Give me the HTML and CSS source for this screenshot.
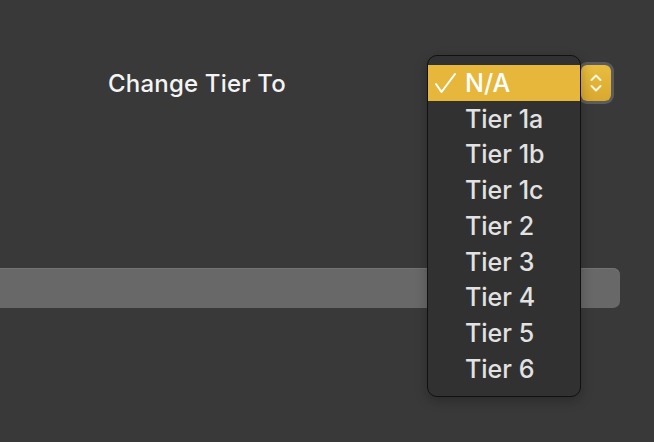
FILE: index.html
```html
<!DOCTYPE html>
<html>
<head>
<meta charset="utf-8">
<link rel="stylesheet" href="styles.css">
</head>
<body>
<div class="panel">
  <div class="row">
    <span class="label">Change Tier To</span>
    <div class="popup">
      <div class="stepper">
        <svg width="14" height="22" viewBox="0 0 14 22">
          <polyline points="2.5,8 7,3.5 11.5,8" fill="none" stroke="#fff7e0" stroke-width="2" stroke-linecap="round" stroke-linejoin="round"/>
          <polyline points="2.5,14 7,18.5 11.5,14" fill="none" stroke="#fff7e0" stroke-width="2" stroke-linecap="round" stroke-linejoin="round"/>
        </svg>
      </div>
    </div>
  </div>
  <div class="bar"></div>
</div>
<div class="menu">
  <div class="item selected">
    <svg class="check" width="24" height="22" viewBox="0 0 24 22">
      <polyline points="2,12 7.5,20 21,2" fill="none" stroke="#fff" stroke-width="2" stroke-linecap="round" stroke-linejoin="round"/>
    </svg>
    <span>N/A</span>
  </div>
  <div class="item"><span>Tier 1a</span></div>
  <div class="item"><span>Tier 1b</span></div>
  <div class="item"><span>Tier 1c</span></div>
  <div class="item"><span>Tier 2</span></div>
  <div class="item"><span>Tier 3</span></div>
  <div class="item"><span>Tier 4</span></div>
  <div class="item"><span>Tier 5</span></div>
  <div class="item"><span>Tier 6</span></div>
</div>
</body>
</html>
```
FILE: styles.css
```css
html, body {
  margin: 0;
  padding: 0;
}
body {
  width: 654px;
  height: 442px;
  background: #393939;
  font-family: Inter, "Liberation Sans", sans-serif;
  overflow: hidden;
  position: relative;
}
.panel {
  padding-top: 61px;
}
.row {
  display: flex;
  align-items: center;
  height: 44px;
}
.label {
  margin-left: 108px;
  color: #f4f4f4;
  font-size: 24px;
  font-weight: 500;
  letter-spacing: 0.2px;
}
.popup {
  margin-left: auto;
  margin-right: 40px;
  width: 180px;
  height: 44px;
  box-sizing: border-box;
  display: flex;
  justify-content: flex-end;
  align-items: center;
}
.stepper {
  width: 30px;
  height: 36px;
  border-radius: 6px;
  background: linear-gradient(#e8bd40, #d9a92e);
  box-shadow: 0 0 0 3px #5c5c5c;
  display: flex;
  align-items: center;
  justify-content: center;
  margin-right: 3px;
}
.bar {
  margin-top: 163px;
  width: 620px;
  height: 40px;
  background: #686868;
  border-radius: 0 7px 7px 0;
  box-shadow: inset 0 1px 0 #737373;
}
.menu {
  position: absolute;
  left: 427px;
  top: 55px;
  width: 154px;
  height: 342px;
  box-sizing: border-box;
  background: #313131;
  border: 1px solid #111;
  border-radius: 10px;
  padding-top: 9px;
  box-shadow: 0 4px 12px rgba(0,0,0,0.25);
}
.item {
  height: 35.75px;
  display: flex;
  align-items: center;
  padding-left: 37px;
  position: relative;
  color: #e2e2e2;
  font-size: 25px;
  font-weight: 500;
}
.item.selected {
  background: #e6b73a;
  color: #fff;
}
.check {
  position: absolute;
  left: 6px;
  top: 7px;
}
```
